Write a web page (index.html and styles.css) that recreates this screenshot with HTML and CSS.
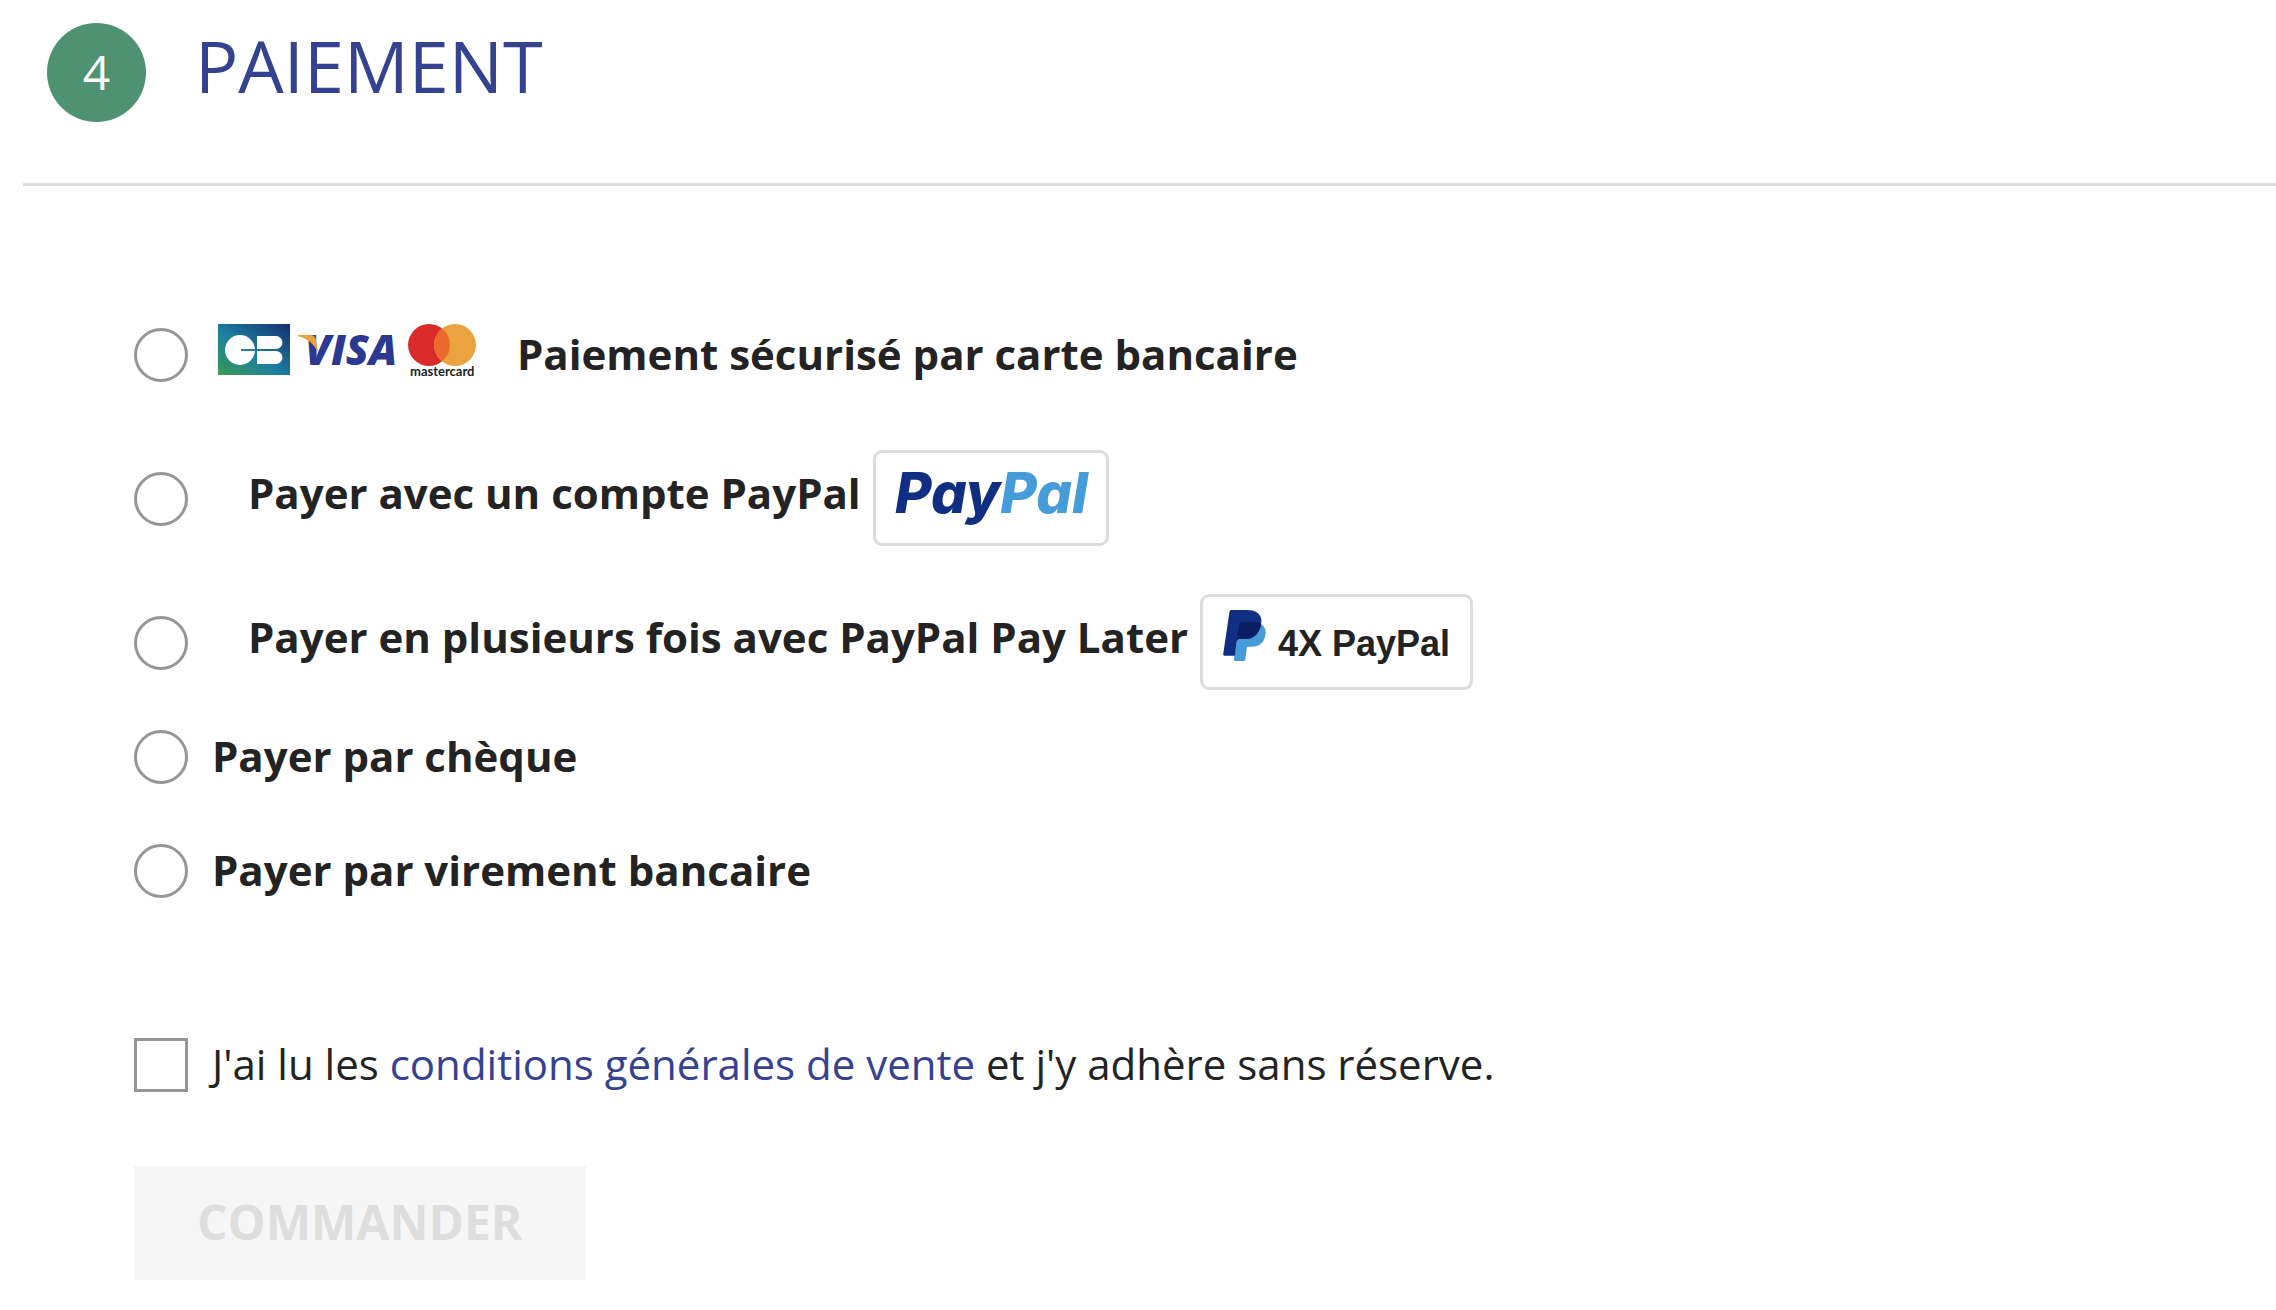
FILE: index.html
```html
<!DOCTYPE html>
<html lang="fr">
<head>
  <meta charset="UTF-8">
  <meta name="viewport" content="width=device-width, initial-scale=1.0">
  <title>Paiement</title>
  <link rel="stylesheet" href="styles.css">
</head>
<body>
  <section class="step">
    <header class="step-header">
      <span class="step-number">4</span>
      <h1 class="step-title">PAIEMENT</h1>
    </header>

    <form class="step-content">
      <ul class="payment-options">
        <li class="option">
          <input type="radio" name="payment" id="payment-card">
          <label class="card-label" for="payment-card">
            <svg class="card-logos" viewBox="0 0 260 54" aria-hidden="true">
              <defs>
                <linearGradient id="cb-blue" x1="0" y1="1" x2="1" y2="0">
                  <stop offset="0" stop-color="#3a9a50"/>
                  <stop offset="0.45" stop-color="#1c7fa0"/>
                  <stop offset="1" stop-color="#152f70"/>
                </linearGradient>
              </defs>
              <!-- CB -->
              <rect width="72" height="51" fill="url(#cb-blue)"/>
              <circle cx="22" cy="26" r="15" fill="#fff"/>
              <path d="M39 12h19a6.500 6.500 0 0 1 0 13H39zM39 27h19a6.500 6.500 0 0 1 0 13H39z" fill="#fff"/>
              <path d="M23 25h15v2H23z" fill="#2a7f96"/>
              <!-- Visa -->
              <text class="visa" x="87" y="41">VISA</text>
              <path d="M80 11h12q5 0 6 5l2 12Q93 15 80 12z" fill="#e9a23b"/>
              <!-- Mastercard -->
              <circle cx="211" cy="21" r="21" fill="#d92b2b"/>
              <circle cx="237" cy="21" r="21" fill="#eba33f"/>
              <path d="M224 4.500a21 21 0 0 1 0 33a21 21 0 0 1 0-33z" fill="#ec6a2c"/>
              <text class="mastercard" x="192" y="52">mastercard</text>
            </svg>
            <span>Paiement sécurisé par carte bancaire</span>
          </label>
        </li>
        <li class="option option-badge">
          <input type="radio" name="payment" id="payment-paypal">
          <label for="payment-paypal">Payer avec un compte PayPal
            <span class="badge">
              <svg class="paypal-logo" viewBox="0 0 190 54" aria-hidden="true">
                <text x="-1" y="42"><tspan fill="#102e82">Pay</tspan><tspan fill="#469bd9">Pal</tspan></text>
              </svg>
            </span>
          </label>
        </li>
        <li class="option option-badge">
          <input type="radio" name="payment" id="payment-later">
          <label for="payment-later">Payer en plusieurs fois avec PayPal Pay Later
            <span class="badge">
              <svg class="paypal-icon" viewBox="0 0 128 153" aria-hidden="true">
                <path d="M114 42C126 50 130 64 126 78C122 100 106 110 88 110H76Q72 110 71 114L66 149Q65 153 61 153H36Q32 153 32 149L50 40Z" fill="#469bd9"/>
                <path d="M24 0H72C100 0 119 14 114 42C108 74 90 87 64 87H48Q42 87 41 93L35 137H4Q0 137 0 133L19 5Q20 0 24 0Z" fill="#102e82"/>
                <path d="M54 36H96Q106 36 114 42C108 74 90 87 64 87H48Q42 87 41 93L49 41Q50 36 54 36Z" fill="#0a1f62"/>
              </svg>
              <span class="badge-text">4X PayPal</span>
            </span>
          </label>
        </li>
        <li class="option">
          <input type="radio" name="payment" id="payment-cheque">
          <label for="payment-cheque">Payer par chèque</label>
        </li>
        <li class="option">
          <input type="radio" name="payment" id="payment-transfer">
          <label for="payment-transfer">Payer par virement bancaire</label>
        </li>
      </ul>

      <div class="terms">
        <input type="checkbox" id="terms">
        <label for="terms">J'ai lu les <a href="#">conditions générales de vente</a> et j'y adhère sans réserve.</label>
      </div>

      <button class="order-button" type="submit" disabled>COMMANDER</button>
    </form>
  </section>
</body>
</html>
```

FILE: styles.css
```css
* {
  box-sizing: border-box;
}
body {
  margin: 0;
  font-family: "Open Sans", sans-serif;
  font-size: 42px;
  line-height: 56px;
  color: #232323;
  background-color: #fff;
}
.step {
  padding: 23px 0 0 23px;
}
.step-header {
  display: flex;
  align-items: flex-start;
  gap: 49px;
  padding: 0 24px 61px;
  border-bottom: 3px solid #dcdedd;
}
.step-number {
  width: 99px;
  height: 99px;
  border-radius: 50%;
  background-color: #4f9271;
  color: #fff;
  font-size: 48px;
  line-height: 97px;
  text-align: center;
}
.step-title {
  margin: 0;
  color: #34428f;
  font-size: 72px;
  font-weight: 400;
  line-height: 84px;
}
.step-content {
  padding: 112px 24px 0 111px;
}
.payment-options {
  margin: 0 0 80px;
  padding: 0;
  list-style: none;
}
.option {
  display: flex;
  align-items: center;
  gap: 24px;
  min-height: 114px;
  font-weight: 700;
}
.option-badge {
  min-height: 144px;
  padding-top: 30px;
}
label {
  padding-bottom: 3px;
}
.option-badge label {
  padding-left: 36px;
}
input[type="radio"],
input[type="checkbox"] {
  appearance: none;
  flex: none;
  width: 54px;
  height: 54px;
  margin: 0;
  border: 3px solid #969696;
  background-color: #fff;
}
input[type="radio"] {
  border-radius: 50%;
}
input:checked {
  background-color: #34428f;
}
.card-label {
  display: flex;
  align-items: center;
}
.card-logos {
  width: 260px;
  height: 54px;
  margin: 0 39px 5px 6px;
  overflow: visible;
}
.visa {
  fill: #2b3990;
  font-size: 42px;
  font-style: italic;
  font-weight: 800;
}
.mastercard {
  fill: #232323;
  font-family: Lato, sans-serif;
  font-size: 13px;
  font-weight: 700;
}
.badge {
  display: inline-flex;
  align-items: center;
  gap: 12px;
  height: 96px;
  margin-left: 1px;
  padding: 0 20px;
  border: 3px solid #dcdcdc;
  border-radius: 9px;
  vertical-align: middle;
}
.paypal-logo {
  width: 190px;
  height: 54px;
  overflow: visible;
  font-family: Inter, sans-serif;
  font-size: 56px;
  font-style: italic;
  font-weight: 800;
}
.paypal-icon {
  width: 43px;
  height: 51px;
  margin-bottom: 12px;
}
.badge-text {
  padding-top: 4px;
  font-family: "Liberation Sans", Arial, sans-serif;
  font-size: 36px;
}
.terms {
  display: flex;
  align-items: center;
  gap: 24px;
  min-height: 114px;
  margin-bottom: 44px;
}
.terms a {
  color: #34428f;
  text-decoration: none;
}
.order-button {
  display: block;
  padding: 23px 63px 25px;
  border: none;
  background-color: #f6f6f6;
  color: #dedede;
  font-family: inherit;
  font-size: 48px;
  font-weight: 700;
  line-height: 66px;
}
```
